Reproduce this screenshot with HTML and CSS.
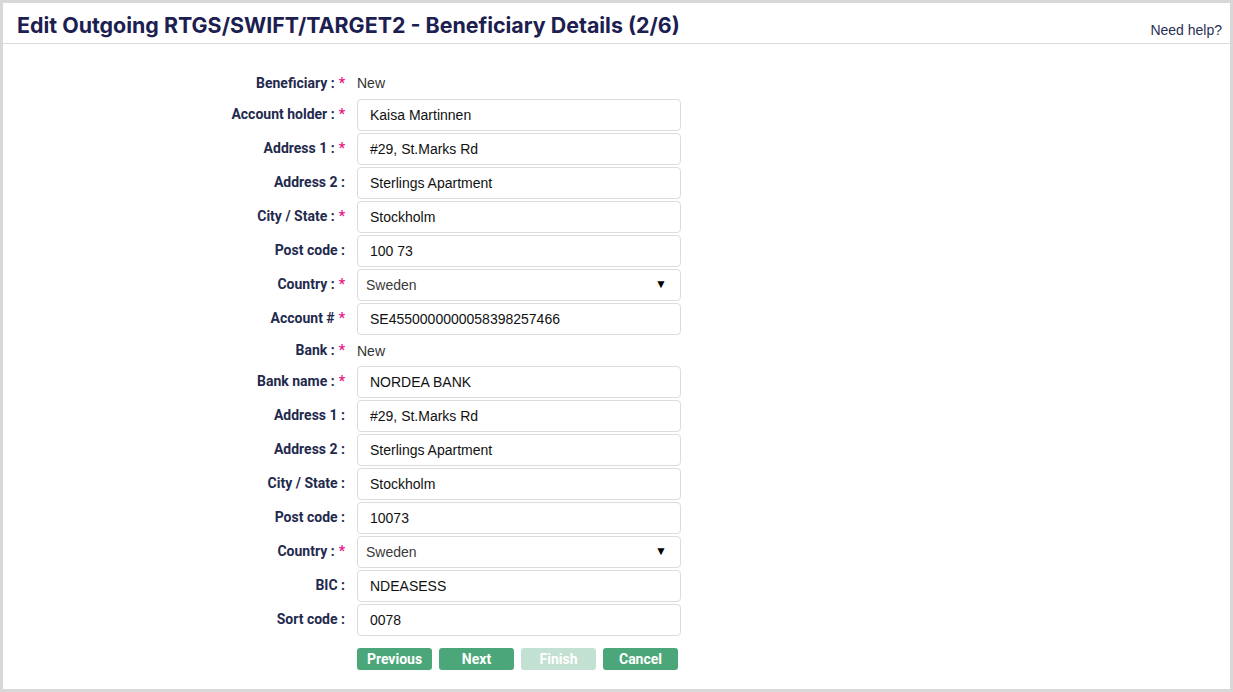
FILE: index.html
```html
<!DOCTYPE html>
<html>
<head>
<meta charset="utf-8">
<link rel="stylesheet" href="styles.css">
</head>
<body>
<div class="frame">
  <div class="header">
    <h1 class="title">Edit Outgoing RTGS/SWIFT/TARGET2 - Beneficiary Details (2/6)</h1>
    <a class="help">Need help?</a>
  </div>
  <div class="form">
    <div class="label text-row">Beneficiary :<span class="req">*</span></div>
    <div class="value text-row">New</div>

    <div class="label">Account holder :<span class="req">*</span></div>
    <div class="field">Kaisa Martinnen</div>

    <div class="label">Address 1 :<span class="req">*</span></div>
    <div class="field">#29, St.Marks Rd</div>

    <div class="label">Address 2 :</div>
    <div class="field">Sterlings Apartment</div>

    <div class="label">City / State :<span class="req">*</span></div>
    <div class="field">Stockholm</div>

    <div class="label">Post code :</div>
    <div class="field">100 73</div>

    <div class="label">Country :<span class="req">*</span></div>
    <div class="field select"><span>Sweden</span><span class="arrow">&#9660;</span></div>

    <div class="label">Account #<span class="req">*</span></div>
    <div class="field">SE4550000000058398257466</div>

    <div class="label text-row short">Bank :<span class="req">*</span></div>
    <div class="value text-row short">New</div>

    <div class="label">Bank name :<span class="req">*</span></div>
    <div class="field">NORDEA BANK</div>

    <div class="label">Address 1 :</div>
    <div class="field">#29, St.Marks Rd</div>

    <div class="label">Address 2 :</div>
    <div class="field">Sterlings Apartment</div>

    <div class="label">City / State :</div>
    <div class="field">Stockholm</div>

    <div class="label">Post code :</div>
    <div class="field">10073</div>

    <div class="label">Country :<span class="req">*</span></div>
    <div class="field select"><span>Sweden</span><span class="arrow">&#9660;</span></div>

    <div class="label">BIC :</div>
    <div class="field">NDEASESS</div>

    <div class="label">Sort code :</div>
    <div class="field">0078</div>

    <div class="spacer"></div>
    <div class="buttons">
      <button class="btn">Previous</button>
      <button class="btn">Next</button>
      <button class="btn disabled">Finish</button>
      <button class="btn">Cancel</button>
    </div>
  </div>
</div>
</body>
</html>
```
FILE: styles.css
```css
* { box-sizing: border-box; }
html, body { margin: 0; padding: 0; background: #fff; }
body { font-family: Roboto, "Liberation Sans", Arial, sans-serif; }

.frame {
  width: 1233px;
  height: 692px;
  border: 3px solid #d8d8d8;
  background: #fff;
}

.header {
  height: 41px;
  border-bottom: 1px solid #dcdcdc;
  display: flex;
  align-items: center;
  justify-content: space-between;
  padding: 0 8px 0 14px;
}
.title {
  margin: 3px 0 0 0;
  font-family: Inter, Roboto, sans-serif;
  font-weight: 700;
  font-size: 21.4px;
  color: #1c2050;
  letter-spacing: 0;
}
.help {
  font-family: "Liberation Sans", Arial, sans-serif;
  font-size: 14px;
  color: #2a3055;
  margin-top: 13px;
}

.form {
  display: grid;
  grid-template-columns: 342px 324px;
  column-gap: 12px;
  row-gap: 2px;
  padding-top: 25px;
  align-items: center;
}
.label {
  text-align: right;
  font-family: Roboto, sans-serif;
  font-weight: 700;
  font-size: 14px;
  color: #1f2a4e;
  padding-bottom: 3px;
}
.req {
  color: #e8168a;
  margin-left: 4px;
  font-weight: 700;
}
.text-row {
  height: 28px;
  display: flex;
  align-items: center;
}
.text-row.short { height: 27px; }
.label.text-row { justify-content: flex-end; padding-bottom: 1px; }
.value {
  font-family: "Liberation Sans", Arial, sans-serif;
  font-size: 14px;
  color: #333;
}
.field {
  height: 32px;
  border: 1px solid #dcdcdc;
  border-radius: 4px;
  padding: 0 12px;
  display: flex;
  align-items: center;
  font-family: "Liberation Sans", Arial, sans-serif;
  font-size: 14px;
  color: #111;
}
.select {
  justify-content: space-between;
  padding: 0 13px 0 8px;
  color: #3a3a3a;
}
.arrow {
  color: #000;
  font-size: 12px;
  margin-top: -3px;
}
.buttons {
  display: flex;
  gap: 7px;
  margin-top: 10px;
}
.btn {
  width: 75px;
  height: 22px;
  border: none;
  border-radius: 3px;
  background: #4ba77a;
  color: #fff;
  font-family: Roboto, sans-serif;
  font-weight: 700;
  font-size: 14px;
  padding: 0;
}
.btn.disabled { background: #c3e1d2; }
```
